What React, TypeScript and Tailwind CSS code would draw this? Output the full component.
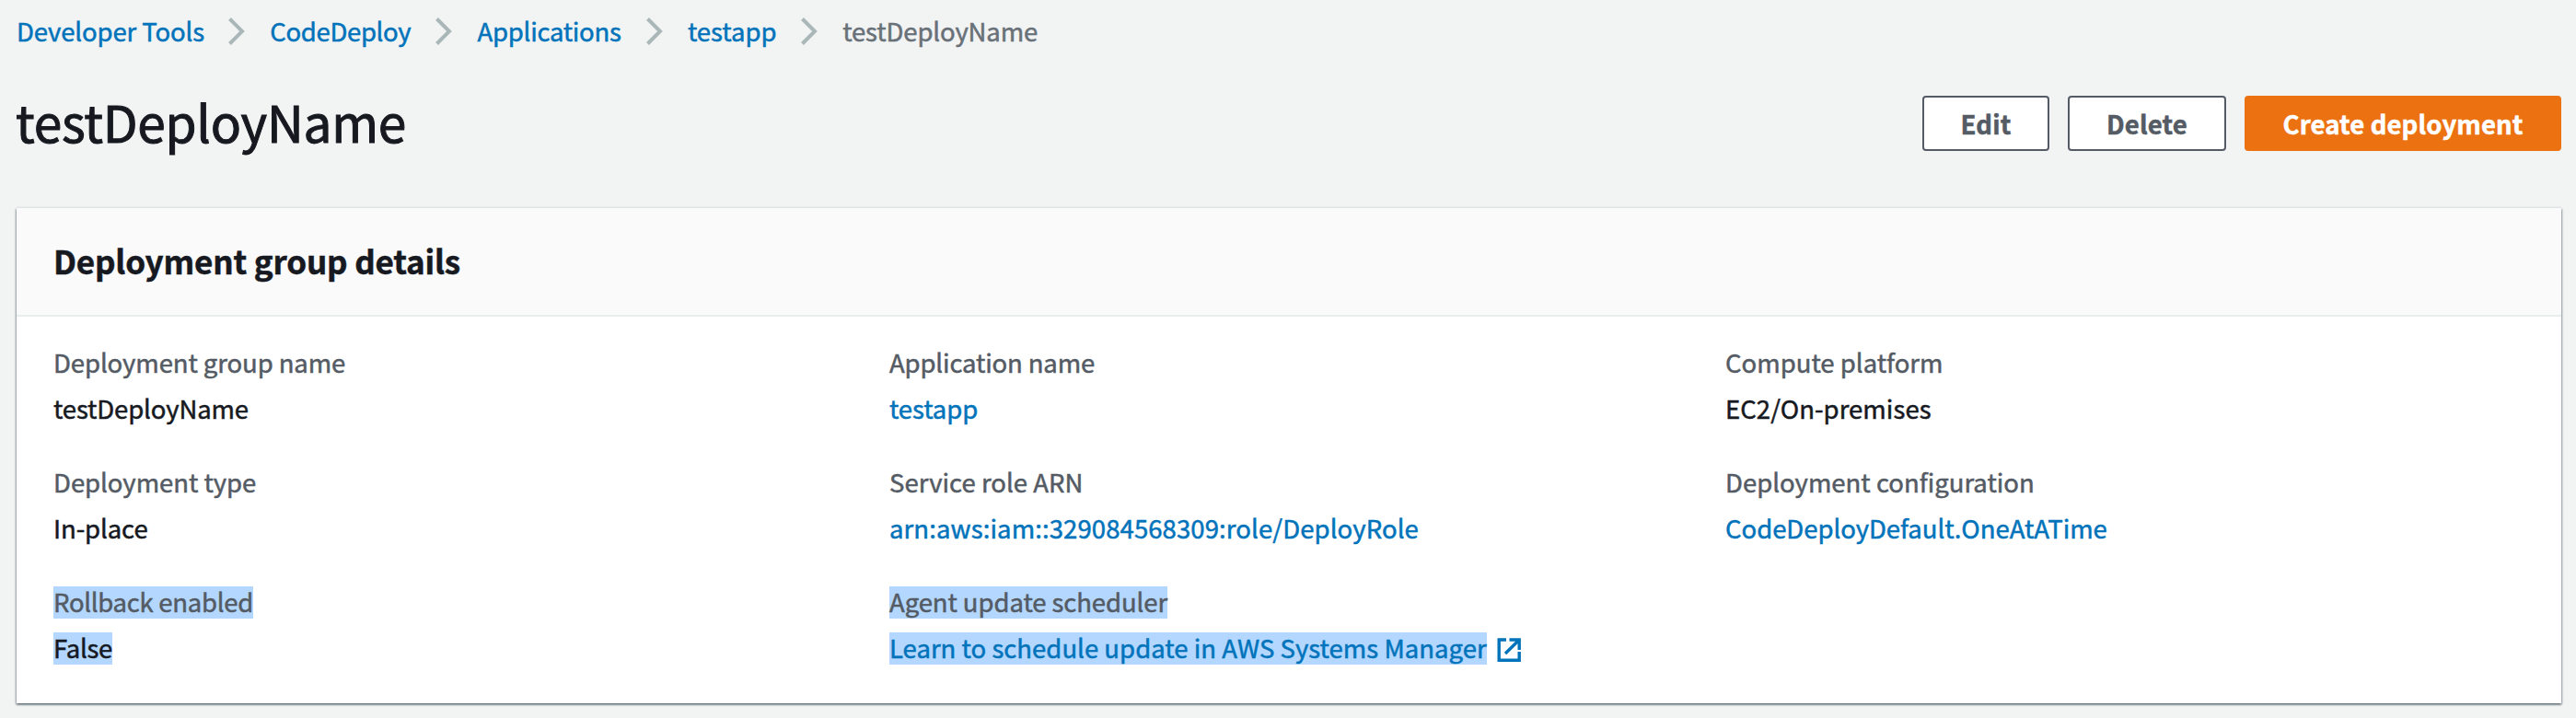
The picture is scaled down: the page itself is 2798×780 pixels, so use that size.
import { Fragment, type ReactNode } from 'react';

type Crumb = { text: string; tracking: string };

const crumbs: Crumb[] = [
  { text: 'Developer Tools', tracking: 'w-[230px] tracking-[-0.12px]' },
  { text: 'CodeDeploy', tracking: 'w-[180px] tracking-[-0.34px]' },
  { text: 'Applications', tracking: 'w-[183px] tracking-[-0.27px]' },
  { text: 'testapp', tracking: 'w-[123px]' },
];

type Field = {
  label: string;
  value: string;
  labelClass?: string;
  valueClass?: string;
  link?: boolean;
  selected?: boolean;
  external?: boolean;
};

const columns: Field[][] = [
  [
    { label: 'Deployment group name', value: 'testDeployName', labelClass: 'tracking-[-0.1px]', valueClass: 'tracking-[-0.13px]' },
    { label: 'Deployment type', value: 'In-place', labelClass: 'tracking-[-0.04px]', valueClass: 'tracking-[-0.1px]' },
    { label: 'Rollback enabled', value: 'False', labelClass: 'tracking-[-0.28px]', valueClass: 'tracking-[-0.3px]', selected: true },
  ],
  [
    { label: 'Application name', value: 'testapp', labelClass: 'tracking-[-0.15px]', valueClass: 'tracking-[-0.08px]', link: true },
    { label: 'Service role ARN', value: 'arn:aws:iam::329084568309:role/DeployRole', labelClass: 'tracking-[0.02px]', valueClass: 'tracking-[0.1px]', link: true },
    { label: 'Agent update scheduler', value: 'Learn to schedule update in AWS Systems Manager', labelClass: 'tracking-[-0.08px]', valueClass: 'tracking-[0.02px]', link: true, selected: true, external: true },
  ],
  [
    { label: 'Compute platform', value: 'EC2/On-premises', valueClass: 'tracking-[0.05px]' },
    { label: 'Deployment configuration', value: 'CodeDeployDefault.OneAtATime', valueClass: 'tracking-[-0.04px]', link: true },
  ],
];

function Chevron() {
  return (
    <svg className="mt-[19px] mr-[27.3px] h-[30px] w-[18px] shrink-0" viewBox="0 0 18 30" fill="none" stroke="#aab7b8" strokeWidth="4">
      <path d="M1.5 1.5 15 15 1.5 28.5" />
    </svg>
  );
}

function ExternalIcon() {
  return (
    <svg className="ml-[11px] inline-block h-[26px] w-[26px] align-[-4px]" viewBox="0 0 26 26" fill="none" stroke="#0073bb" strokeWidth="3.4">
      <path d="M10 2H2.2v22.2h22V15M13.5 2h10.7v11M24 2.2 9 17" />
    </svg>
  );
}

function Text({ selected, children }: { selected?: boolean; children: ReactNode }) {
  if (!selected) return <>{children}</>;
  return <span className="inline-block bg-[#b3d7ff] pb-[3px] leading-8">{children}</span>;
}

function DetailField({ field }: { field: Field }) {
  return (
    <div className="flex flex-col gap-1.5 leading-[44px] whitespace-nowrap">
      <div className={`h-11 text-[#545b64] ${field.labelClass ?? ''}`}>
        <Text selected={field.selected}>{field.label}</Text>
      </div>
      <div className={`h-11 ${field.link ? 'text-[#0073bb]' : 'text-[#16191f]'} ${field.valueClass ?? ''}`}>
        <Text selected={field.selected}>{field.value}</Text>
        {field.external && <ExternalIcon />}
      </div>
    </div>
  );
}

export default function App() {
  return (
    <div className="h-[780px] overflow-hidden bg-[#f2f3f3] pr-[15px] pl-[17px] font-['Noto_Sans_CJK_SC',sans-serif] text-[27.5px] text-[#16191f] [-webkit-text-stroke:0.5px]">
      <nav className="flex h-[68px] pl-px leading-[66px] whitespace-nowrap">
        {crumbs.map((c) => (
          <Fragment key={c.text}>
            <a className={`shrink-0 text-[#0073bb] ${c.tracking}`}>{c.text}</a>
            <Chevron />
          </Fragment>
        ))}
        <span className="tracking-[-0.13px] text-[#687078]">testDeployName</span>
      </nav>

      <header className="flex h-[158px] items-start justify-between pt-9 pr-px">
        <h1 className="text-[55px] leading-[54px] tracking-[-0.25px] [-webkit-text-stroke:1px]">testDeployName</h1>
        <div className="flex gap-5 leading-[54px] font-bold whitespace-nowrap">
          <button className="h-[60px] w-[138px] rounded-[4px] border-2 border-[#545b64] bg-white tracking-[0.2px] text-[#545b64]">Edit</button>
          <button className="h-[60px] w-[172px] rounded-[4px] border-2 border-[#545b64] bg-white tracking-[0.18px] text-[#545b64]">Delete</button>
          <button className="h-[60px] w-[344px] rounded-[4px] border-2 border-[#ec7211] bg-[#ec7211] tracking-[0.13px] text-white">Create deployment</button>
        </div>
      </header>

      <section className="mx-px h-[538px] bg-white shadow-[0_2px_2px_0_rgba(0,28,36,0.3),1px_1px_2px_0_rgba(0,28,36,0.3),-1px_1px_2px_0_rgba(0,28,36,0.3),0_-2px_0_0_#eaeded]">
        <div className="flex h-[118px] items-center border-b-2 border-[#eaeded] bg-[#fafafa] px-10 pb-[3px]">
          <h2 className="text-[35px] leading-[44px] font-bold tracking-[-0.18px]">Deployment group details</h2>
        </div>
        <div className="grid grid-cols-[908px_908px_1fr] px-10 pt-[27px]">
          {columns.map((fields) => (
            <div key={fields[0].label} className="flex flex-col gap-9">
              {fields.map((f) => (
                <DetailField key={f.label} field={f} />
              ))}
            </div>
          ))}
        </div>
      </section>
    </div>
  );
}
